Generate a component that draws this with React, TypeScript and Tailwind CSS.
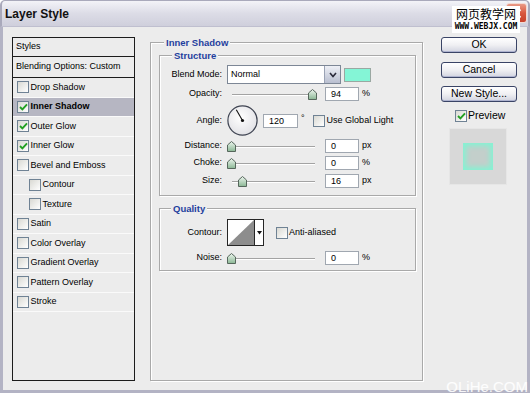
import React from "react";

function Check({ checked }: { checked?: boolean }) {
  return (
    <div className="w-[12px] h-[12px] shrink-0 border border-[#6f8294] bg-gradient-to-br from-[#d9d9d3] to-white flex items-center justify-center">
      {checked && (
        <svg width="9" height="8" viewBox="0 0 9 8">
          <path d="M1 4 L3.4 6.4 L8 1.4" stroke="#22a022" strokeWidth="1.9" fill="none" />
        </svg>
      )}
    </div>
  );
}

function Thumb() {
  return (
    <svg width="9" height="11" viewBox="0 0 9 11">
      <defs>
        <linearGradient id="thg" x1="0" y1="0" x2="0" y2="1">
          <stop offset="0" stopColor="#eef6ef" />
          <stop offset="1" stopColor="#8ab794" />
        </linearGradient>
      </defs>
      <path d="M4.5 0.5 L8.5 4 L8.5 10.5 L0.5 10.5 L0.5 4 Z" fill="url(#thg)" stroke="#56675c" />
    </svg>
  );
}

function Slider({ pos }: { pos: number }) {
  return (
    <div className="relative w-[91px] h-[14px] shrink-0">
      <div className="absolute left-[5px] right-[3px] top-[7px] h-[2px] border-t border-[#a3a3a3] border-b border-b-white" />
      <div className="absolute top-[2px] leading-none" style={{ left: pos - 4.5 }}>
        <Thumb />
      </div>
    </div>
  );
}

function Field({ v, wide }: { v: string; wide?: boolean }) {
  return (
    <div
      className={
        wide
          ? "w-[35px] h-[14px] shrink-0 border border-[#a0a7b0] bg-white text-[9px] leading-[12px] pl-[5px] text-black"
          : "w-[34px] h-[14px] shrink-0 border border-[#a0a7b0] bg-white text-[9px] leading-[12px] pl-[5px] text-black"
      }
    >
      {v}
    </div>
  );
}

function Label({ children }: { children: React.ReactNode }) {
  return <div className="w-[62px] shrink-0 text-right text-[9px] text-black">{children}</div>;
}

function Btn({ children, extra }: { children: React.ReactNode; extra: string }) {
  return (
    <div
      className={
        "w-[76px] h-[16px] rounded-[3px] border border-[#3a4466] bg-gradient-to-b from-white via-[#f0f0f3] to-[#d2d4e0] shadow-[inset_0_-1px_0_#aeb3cf] flex items-center justify-center text-[10.5px] text-black " +
        extra
      }
    >
      {children}
    </div>
  );
}

const rows: { label: string; checked?: boolean; selected?: boolean; indent?: boolean }[] = [
  { label: "Drop Shadow" },
  { label: "Inner Shadow", checked: true, selected: true },
  { label: "Outer Glow", checked: true },
  { label: "Inner Glow", checked: true },
  { label: "Bevel and Emboss" },
  { label: "Contour", indent: true },
  { label: "Texture", indent: true },
  { label: "Satin" },
  { label: "Color Overlay" },
  { label: "Gradient Overlay" },
  { label: "Pattern Overlay" },
  { label: "Stroke" },
];

export default function App() {
  return (
    <div className="relative w-[530px] h-[395px] bg-white overflow-hidden font-['Liberation_Sans',Arial,sans-serif] text-black">
      {/* title bar */}
      <div className="h-[27px] rounded-t-[5px] bg-gradient-to-b from-[#f3f3f8] via-[#dcdce6] to-[#cfcfdc] border-x-[2px] border-t border-[#a9a9bb] border-b border-b-[#bfbfcf] flex items-center pl-[3px]">
        <span className="text-[12px] font-bold text-[#111]">Layer Style</span>
      </div>
      {/* close button */}
      <div className="absolute top-[3px] right-[3px] w-[21px] h-[20px] rounded-[3px] border border-[#f3d9d2] bg-gradient-to-b from-[#e99a87] via-[#d9573f] to-[#c7412b] flex items-center justify-center">
        <svg width="11" height="11" viewBox="0 0 11 11">
          <path d="M1.5 1.5 L9.5 9.5 M9.5 1.5 L1.5 9.5" stroke="white" strokeWidth="2" />
        </svg>
      </div>

      {/* body */}
      <div className="h-[366px] bg-[#ececec] border-x-[3px] border-b-[3px] border-[#b3b3c4] flex items-start pt-[10px]">
        {/* left list */}
        <div className="ml-[9px] w-[123px] h-[344px] border border-[#1c1c1c] shrink-0 text-[9px]">
          <div className="h-[19px] border-b border-[#1c1c1c] flex items-center pl-[3px]">Styles</div>
          <div className="h-[21px] border-b border-[#1c1c1c] flex items-center pl-[3px]">Blending Options: Custom</div>
          {rows.map((r) => (
            <div
              key={r.label}
              className={
                r.selected
                  ? "h-[19.5px] border-b border-[#fafafa] bg-[#b6b6c2] flex items-center pl-[4px] gap-[1.5px] font-bold"
                  : r.indent
                  ? "h-[19.5px] border-b border-[#fafafa] flex items-center pl-[16px] gap-[1.5px]"
                  : "h-[19.5px] border-b border-[#fafafa] flex items-center pl-[4px] gap-[1.5px]"
              }
            >
              <Check checked={r.checked} />
              <span>{r.label}</span>
            </div>
          ))}
        </div>

        {/* main group */}
        <div className="relative ml-[15px] mt-[5px] w-[273px] h-[339px] shrink-0 border border-[#a9a9a9] shadow-[inset_1px_1px_0_#fff,1px_1px_0_#fff] pl-[8px] pt-[12px]">
          <span className="absolute left-[13px] top-[-7px] bg-[#ececec] px-[2px] text-[9.5px] font-bold text-[#1f3f9e]">Inner Shadow</span>

          {/* structure */}
          <div className="relative w-[257px] h-[141px] border border-[#a9a9a9] shadow-[inset_1px_1px_0_#fff,1px_1px_0_#fff] pt-[9px] flex flex-col">
            <span className="absolute left-[12px] top-[-7px] bg-[#ececec] px-[2px] text-[9.5px] font-bold text-[#1f3f9e]">Structure</span>

            <div className="h-[19px] flex items-center">
              <Label>Blend Mode:</Label>
              <div className="ml-[5px] w-[114px] h-[19px] border border-[#7d8796] bg-white flex items-stretch">
                <div className="flex-1 flex items-center pl-[3px] text-[9px]">Normal</div>
                <div className="w-[16px] border-l border-[#9aa2b4] bg-gradient-to-b from-[#eef0f6] to-[#b9bfd0] flex items-center justify-center">
                  <svg width="8" height="6" viewBox="0 0 8 6">
                    <path d="M1 1 L4 4.5 L7 1" stroke="#2a2a3a" strokeWidth="1.6" fill="none" />
                  </svg>
                </div>
              </div>
              <div className="ml-[3px] w-[27px] h-[14px] border border-[#9aa8a2] bg-[#84f5d6]" />
            </div>

            <div className="mt-[3px] h-[14px] flex items-center">
              <Label>Opacity:</Label>
              <div className="ml-[5px]">
                <Slider pos={85} />
              </div>
              <div className="ml-[7px]">
                <Field v="94" />
              </div>
              <span className="ml-[3px] text-[9px]">%</span>
            </div>

            <div className="mt-[4px] h-[31px] flex items-center">
              <Label>Angle:</Label>
              <div className="ml-[5px] w-[31px] h-[31px] shrink-0">
                <svg width="31" height="31" viewBox="0 0 31 31">
                  <defs>
                    <radialGradient id="dialg" cx="0.45" cy="0.4" r="0.6">
                      <stop offset="0" stopColor="#ffffff" />
                      <stop offset="1" stopColor="#e2e2e6" />
                    </radialGradient>
                  </defs>
                  <circle cx="15.5" cy="15.5" r="14.6" fill="url(#dialg)" stroke="#3f4452" strokeWidth="1.2" />
                  <line x1="15.5" y1="15.5" x2="9.3" y2="4.8" stroke="#111" strokeWidth="1.1" />
                  <circle cx="15.5" cy="15.5" r="1.6" fill="#111" />
                </svg>
              </div>
              <div className="ml-[5px]">
                <Field v="120" wide />
              </div>
              <span className="ml-[3px] text-[9px] self-start mt-[7px]">°</span>
              <div className="ml-[8px]">
                <Check />
              </div>
              <span className="ml-[2px] text-[9px]">Use Global Light</span>
            </div>

            <div className="mt-[3px] h-[14px] flex items-center">
              <Label>Distance:</Label>
              <div className="ml-[5px]">
                <Slider pos={4} />
              </div>
              <div className="ml-[7px]">
                <Field v="0" />
              </div>
              <span className="ml-[3px] text-[9px]">px</span>
            </div>

            <div className="mt-[3px] h-[14px] flex items-center">
              <Label>Choke:</Label>
              <div className="ml-[5px]">
                <Slider pos={4} />
              </div>
              <div className="ml-[7px]">
                <Field v="0" />
              </div>
              <span className="ml-[3px] text-[9px]">%</span>
            </div>

            <div className="mt-[4px] h-[14px] flex items-center">
              <Label>Size:</Label>
              <div className="ml-[5px]">
                <Slider pos={15} />
              </div>
              <div className="ml-[7px]">
                <Field v="16" />
              </div>
              <span className="ml-[3px] text-[9px]">px</span>
            </div>
          </div>

          {/* quality */}
          <div className="relative mt-[12px] w-[257px] h-[63px] border border-[#a9a9a9] shadow-[inset_1px_1px_0_#fff,1px_1px_0_#fff] pt-[10px] flex flex-col">
            <span className="absolute left-[11px] top-[-7px] bg-[#ececec] px-[2px] text-[9.5px] font-bold text-[#1f3f9e]">Quality</span>

            <div className="h-[27px] flex items-center">
              <Label>Contour:</Label>
              <div className="ml-[5px] w-[37px] h-[27px] border border-[#262626] bg-white flex shrink-0">
                <svg width="26" height="25" viewBox="0 0 26 25">
                  <polygon points="0,25 26,0 26,25" fill="#8d8d8d" />
                </svg>
                <div className="flex-1 border-l border-[#262626] flex items-center justify-center">
                  <svg width="5" height="4" viewBox="0 0 5 4">
                    <polygon points="0,0 5,0 2.5,3.5" fill="#111" />
                  </svg>
                </div>
              </div>
              <div className="ml-[12px]">
                <Check />
              </div>
              <span className="ml-[1px] text-[9px]">Anti-aliased</span>
            </div>

            <div className="mt-[5px] h-[14px] flex items-center">
              <Label>Noise:</Label>
              <div className="ml-[5px]">
                <Slider pos={4} />
              </div>
              <div className="ml-[7px]">
                <Field v="0" />
              </div>
              <span className="ml-[3px] text-[9px]">%</span>
            </div>
          </div>
        </div>

        {/* right column */}
        <div className="ml-[18px] w-[76px] shrink-0 flex flex-col">
          <Btn extra="">OK</Btn>
          <Btn extra="mt-[9px]">Cancel</Btn>
          <Btn extra="mt-[8px]">New Style...</Btn>
          <div className="mt-[7px] ml-[14px] h-[13px] flex items-center gap-[1px]">
            <Check checked />
            <span className="text-[10.5px]">Preview</span>
          </div>
          <div className="mt-[6px] ml-[8px] w-[58px] h-[57px] bg-[#d8d8d8] border border-[#e6e6e6] pl-[13px] pt-[14px]">
            <div className="w-[30px] h-[27px] bg-[#c3cfcb] shadow-[inset_0_0_5px_3px_#86f2d3]" />
          </div>
        </div>
      </div>

      {/* watermarks */}
      <div className="absolute left-[452px] top-[6px] w-[68px] h-[27px] bg-white flex flex-col items-center overflow-hidden">
        <span className="whitespace-nowrap text-[12px] leading-[16px] font-['Noto_Sans_CJK_SC',sans-serif] text-black">网页教学网</span>
        <span className="whitespace-nowrap text-[8px] leading-[10px] font-bold font-['DejaVu_Sans_Mono',monospace] text-black">WWW.WEBJX.COM</span>
      </div>
      <span className="absolute right-[2px] bottom-[0px] whitespace-nowrap text-[15px] leading-[17px] text-white/90 font-['Liberation_Sans',Arial,sans-serif]">OLiHe.COM</span>
    </div>
  );
}
